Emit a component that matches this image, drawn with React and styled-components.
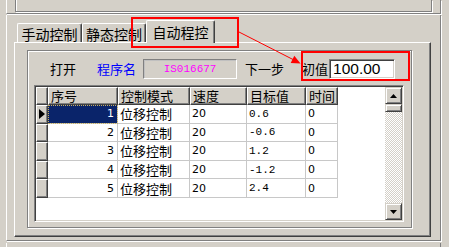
import React from 'react'
import styled, { createGlobalStyle } from 'styled-components'

const GlobalStyle = createGlobalStyle`
  html, body {
    margin: 0;
    padding: 0;
    background: #d4d0c8;
  }
  body {
    font-family: "Noto Sans CJK SC", "Noto Sans", sans-serif;
    font-size: 13px;
    color: #000;
  }
`

const cjk = `"Noto Sans CJK SC", "Noto Sans", sans-serif`
const mono = `"Liberation Mono", "DejaVu Sans Mono", monospace`
const sans = `"DejaVu Sans", "Liberation Sans", sans-serif`

const Page = styled.div`
  position: relative;
  width: 449px;
  height: 247px;
  overflow: hidden;
  background: #d4d0c8;
`

const TopFrame = styled.div`
  box-sizing: border-box;
  margin-left: 6px;
  width: 435px;
  height: 14px;
  padding-left: 8px;
  border-left: 1px solid #fff;
  border-right: 1px solid #808080;
  border-bottom: 1px solid #808080;
  box-shadow: 1px 1px 0 #fff;
`

const TopInner = styled.div`
  box-sizing: border-box;
  width: 417px;
  height: 12px;
  border-left: 1px solid #808080;
  border-right: 1px solid #808080;
  border-bottom: 1px solid #808080;
  box-shadow: 1px 1px 0 #fff, inset 1px 0 0 #fff;
`

const MainFrame = styled.div`
  box-sizing: border-box;
  margin: 1px 0 0 6px;
  width: 435px;
  height: 226px;
  padding: 5px 0 0 7px;
  border-left: 1px solid #fff;
  border-right: 1px solid #808080;
  border-bottom: 1px solid #808080;
  box-shadow: 1px 1px 0 #fff;
`

const BottomFrame = styled.div`
  box-sizing: border-box;
  margin: 2px 0 0 6px;
  width: 435px;
  height: 6px;
  border-left: 1px solid #fff;
  border-right: 1px solid #808080;
`

const TabControl = styled.div`
  display: flex;
  flex-direction: column;
  width: 417px;
  height: 217px;
`

const TabRow = styled.div`
  display: flex;
  align-items: flex-end;
  height: 22px;
  padding-left: 3px;
`

const Tab = styled.div`
  position: relative;
  box-sizing: border-box;
  display: flex;
  align-items: center;
  justify-content: center;
  width: ${p => p.$w}px;
  height: ${p => (p.$active ? 23 : 19)}px;
  margin-bottom: ${p => (p.$active ? -1 : 0)}px;
  z-index: ${p => (p.$active ? 1 : 0)};
  background: #d4d0c8;
  border-top: 1px solid #fff;
  border-left: 1px solid #fff;
  border-right: 1px solid #404040;
  border-radius: 2px 2px 0 0;
  box-shadow: inset -1px 0 0 #808080;
  font-family: ${cjk};
  font-size: 14px;
  line-height: 1;
  padding-top: ${p => (p.$active ? 0 : 1)}px;
`

const Panel = styled.div`
  box-sizing: border-box;
  height: 195px;
  padding: 7px 0 0 12px;
  border-top: 1px solid #fff;
  border-left: 1px solid #fff;
  border-right: 1px solid #404040;
  border-bottom: 1px solid #404040;
  box-shadow: inset -1px -1px 0 #808080;
`

const Group = styled.div`
  box-sizing: border-box;
  width: 385px;
  height: 178px;
  padding-left: 22px;
  border: 1px solid #808080;
  box-shadow: inset 1px 1px 0 #fff, 1px 1px 0 #fff;
`

const Toolbar = styled.div`
  display: flex;
  align-items: center;
  height: 20px;
  margin-top: 8px;
`

const Label = styled.span`
  margin-left: ${p => p.$ml || 0}px;
  font-family: ${cjk};
  font-size: 13px;
  line-height: 1;
  white-space: nowrap;
  color: ${p => p.$color || '#000'};
  margin-top: -2px;
`

const NameBox = styled.div`
  box-sizing: border-box;
  display: flex;
  align-items: center;
  justify-content: center;
  margin-left: 7px;
  width: 94px;
  height: 20px;
  background: #d4d0c8;
  border: 1px solid;
  border-color: #808080 #fff #fff #808080;
  box-shadow: inset 1px 1px 0 #c0c0c0;
  font-family: ${mono};
  font-size: 11px;
  color: #ff00ff;
`

const ValueInput = styled.div`
  box-sizing: border-box;
  display: flex;
  align-items: center;
  margin-left: 1px;
  width: 66px;
  height: 20px;
  padding-left: 3px;
  background: #fff;
  border: 1px solid;
  border-color: #808080 #fff #fff #808080;
  box-shadow: inset 1px 1px 0 #404040, inset -1px -1px 0 #d4d0c8;
  font-family: "Liberation Sans", Arial, sans-serif;
  font-size: 15.5px;
`

const Grid = styled.div`
  box-sizing: border-box;
  display: flex;
  margin: 6px 0 0 -16px;
  width: 370px;
  height: 137px;
  background: #fff;
  border: 1px solid;
  border-color: #808080 #fff #fff #808080;
  box-shadow: inset 1px 1px 0 #404040, inset -1px -1px 0 #d4d0c8;
  padding: 1px;
`

const Table = styled.div`
  flex: 1;
  display: flex;
  flex-direction: column;
`

const Row = styled.div`
  display: flex;
  height: ${p => p.$h}px;
`

const HeadCell = styled.div`
  box-sizing: border-box;
  width: ${p => p.$w}px;
  padding-left: 2px;
  background: #d4d0c8;
  border-top: 1px solid #fff;
  border-left: 1px solid #fff;
  border-right: 1px solid #404040;
  border-bottom: 1px solid #404040;
  box-shadow: inset -1px -1px 0 #808080;
  font-family: ${cjk};
  font-size: 13px;
  line-height: 15px;
  white-space: nowrap;
  overflow: hidden;
`

const IndCell = styled.div`
  box-sizing: border-box;
  display: flex;
  align-items: center;
  justify-content: center;
  width: 12px;
  background: #d4d0c8;
  border-top: 1px solid #fff;
  border-left: 1px solid #fff;
  border-right: 1px solid #404040;
  border-bottom: 1px solid #404040;
  box-shadow: inset -1px -1px 0 #808080;
`

const Cell = styled.div`
  box-sizing: border-box;
  display: flex;
  align-items: center;
  justify-content: ${p => (p.$right ? 'flex-end' : 'flex-start')};
  width: ${p => p.$w}px;
  padding: ${p => (p.$right ? '0 3px 0 0' : '0 0 0 2px')};
  background: ${p => (p.$selected ? '#0a246a' : '#fff')};
  color: ${p => (p.$selected ? '#fff' : '#000')};
  border-right: 1px solid #c8c8c8;
  border-bottom: 1px solid #c8c8c8;
  outline: ${p => (p.$selected ? '1px dotted #c8b060' : 'none')};
  outline-offset: -1px;
  font-family: ${p => (p.$font === 'cjk' ? cjk : p.$font === 'mono' ? mono : sans)};
  font-size: ${p => (p.$font === 'cjk' ? 13 : p.$font === 'mono' ? 11 : 11)}px;
  white-space: nowrap;
`

const ScrollBar = styled.div`
  display: flex;
  flex-direction: column;
  width: 17px;
`

const ScrollBtn = styled.div`
  box-sizing: border-box;
  display: flex;
  align-items: center;
  justify-content: center;
  height: ${p => p.$h}px;
  background: #d4d0c8;
  border: 1px solid;
  border-color: #d4d0c8 #404040 #404040 #d4d0c8;
  box-shadow: inset 1px 1px 0 #fff, inset -1px -1px 0 #808080;
`

const Track = styled.div`
  flex: 1;
  background-image: repeating-conic-gradient(#fff 0 25%, #d4d0c8 0 50%);
  background-size: 2px 2px;
`

const RedBox = styled.div`
  position: absolute;
  box-sizing: border-box;
  left: ${p => p.$x}px;
  top: ${p => p.$y}px;
  width: ${p => p.$w}px;
  height: ${p => p.$h}px;
  border: 2px solid #ff0000;
  pointer-events: none;
`

const Overlay = styled.svg`
  position: absolute;
  left: 0;
  top: 0;
  pointer-events: none;
`

const cols = [70, 72, 57, 59, 32]
const heads = ['序号', '控制模式', '速度', '目标值', '时间']
const rows = [
  ['1', '位移控制', '20', '0.6', '0'],
  ['2', '位移控制', '20', '-0.6', '0'],
  ['3', '位移控制', '20', '1.2', '0'],
  ['4', '位移控制', '20', '-1.2', '0'],
  ['5', '位移控制', '20', '2.4', '0'],
]
const fonts = ['sans', 'cjk', 'sans', 'mono', 'sans']

export default function App() {
  return (
    <Page>
      <GlobalStyle />
      <TopFrame>
        <TopInner />
      </TopFrame>
      <MainFrame>
        <TabControl>
          <TabRow>
            <Tab $w={65}>手动控制</Tab>
            <Tab $w={64}>静态控制</Tab>
            <Tab $w={69} $active>自动程控</Tab>
          </TabRow>
          <Panel>
            <Group>
              <Toolbar>
                <Label>打开</Label>
                <Label $ml={21} $color="#0000ff">程序名</Label>
                <NameBox>IS016677</NameBox>
                <Label $ml={8}>下一步</Label>
                <Label $ml={18}>初值</Label>
                <ValueInput>100.00</ValueInput>
              </Toolbar>
              <Grid>
                <Table>
                  <Row $h={18}>
                    <HeadCell $w={12} />
                    {heads.map((h, i) => (
                      <HeadCell key={h} $w={cols[i]}>{h}</HeadCell>
                    ))}
                  </Row>
                  {rows.map((r, ri) => (
                    <Row key={ri} $h={18.6}>
                      <IndCell>
                        {ri === 0 && (
                          <svg width="6" height="10" viewBox="0 0 6 10">
                            <polygon points="0,0 6,5 0,10" fill="#000" />
                          </svg>
                        )}
                      </IndCell>
                      {r.map((v, ci) => (
                        <Cell
                          key={ci}
                          $w={cols[ci]}
                          $right={ci === 0}
                          $selected={ri === 0 && ci === 0}
                          $font={fonts[ci]}
                        >
                          {v}
                        </Cell>
                      ))}
                    </Row>
                  ))}
                </Table>
                <ScrollBar>
                  <ScrollBtn $h={17}>
                    <svg width="7" height="4" viewBox="0 0 7 4">
                      <polygon points="3.5,0 7,4 0,4" fill="#000" />
                    </svg>
                  </ScrollBtn>
                  <ScrollBtn $h={8} />
                  <Track />
                  <ScrollBtn $h={17}>
                    <svg width="7" height="4" viewBox="0 0 7 4">
                      <polygon points="0,0 7,0 3.5,4" fill="#000" />
                    </svg>
                  </ScrollBtn>
                </ScrollBar>
              </Grid>
            </Group>
          </Panel>
        </TabControl>
      </MainFrame>
      <BottomFrame />

      <RedBox $x={131} $y={17} $w={108} $h={31} />
      <RedBox $x={301} $y={51} $w={109} $h={30} />
      <Overlay width="449" height="247">
        <line x1="239" y1="32" x2="293" y2="59.5" stroke="#ff0000" strokeWidth="1" />
        <polygon points="300.5,63.5 290.7,63 294.3,55.8" fill="#ff0000" />
      </Overlay>
    </Page>
  )
}
